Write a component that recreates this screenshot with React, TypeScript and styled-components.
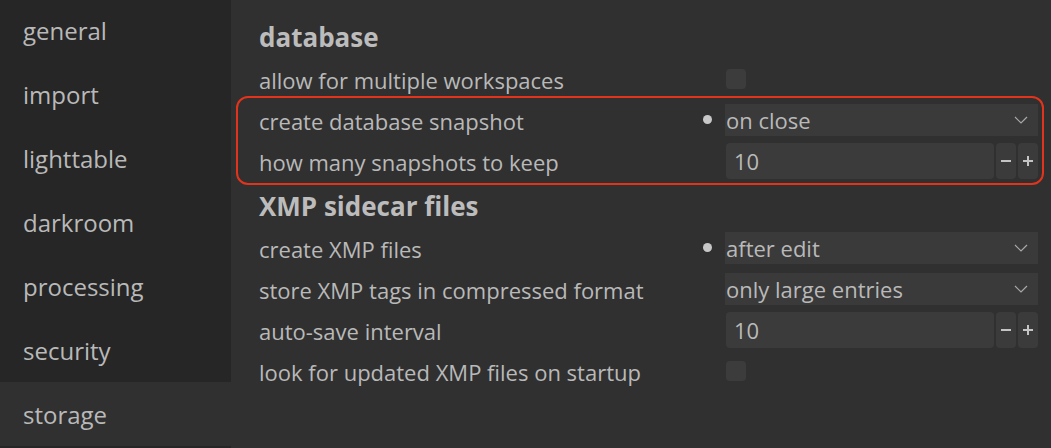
import React from "react";
import styled, { createGlobalStyle } from "styled-components";

const GlobalStyle = createGlobalStyle`
  html, body {
    margin: 0;
    padding: 0;
    background: #303030;
  }
  body {
    font-family: "Open Sans", "Noto Sans", sans-serif;
    color: #b9b9b9;
  }
`;

// layout
const Window = styled.div`
  display: flex;
  width: 1051px;
  height: 448px;
  overflow: hidden;
  background: #303030;
`;

const Sidebar = styled.nav`
  width: 231px;
  flex-shrink: 0;
  background: #262626;
  display: flex;
  flex-direction: column;
  padding-top: 0;
  margin-top: -2px;
`;

const NavItem = styled.div<{ $active?: boolean }>`
  height: 64px;
  flex-shrink: 0;
  display: flex;
  align-items: center;
  padding-left: 23px;
  font-size: 24px;
  color: #b9b9b9;
  background: ${(p) => (p.$active ? "#303030" : "transparent")};
`;

const Main = styled.main`
  flex: 1;
  padding: 12px 13px 0 28px;
  display: flex;
  flex-direction: column;
`;

const SectionTitle = styled.h2`
  margin: 0;
  height: 46px;
  display: flex;
  align-items: center;
  padding-top: 3px;
  box-sizing: border-box;
  font-size: 26px;
  font-weight: 700;
  color: #bcbcbc;
`;

const Row = styled.div`
  height: 41px;
  display: flex;
  align-items: center;
`;

const Label = styled.span`
  flex: 1;
  font-size: 22px;
  padding-top: 2px;
  white-space: nowrap;
`;

const Marker = styled.span<{ $on?: boolean }>`
  width: 28px;
  margin-right: 4px;
  display: flex;
  align-items: center;
  justify-content: center;
  &::before {
    content: "";
    display: ${(p) => (p.$on ? "block" : "none")};
    width: 9px;
    height: 9px;
    border-radius: 50%;
    background: #c8c8c8;
  }
`;

const Control = styled.div`
  width: 313px;
  display: flex;
  align-items: center;
  gap: 2px;
`;

const Select = styled.div`
  flex: 1;
  height: 32px;
  display: flex;
  align-items: center;
  justify-content: space-between;
  padding: 0 10px 0 1px;
  background: #3a3a3a;
  font-size: 22px;
`;

const NumberBox = styled.div`
  flex: 1;
  height: 36px;
  display: flex;
  align-items: center;
  padding-left: 8px;
  margin-left: 1px;
  border-radius: 4px;
  background: #3b3b3b;
  font-size: 22px;
`;

const StepButton = styled.div`
  width: 20px;
  height: 36px;
  border-radius: 4px;
  background: #3b3b3b;
  display: flex;
  align-items: center;
  justify-content: center;
  color: #c4c4c4;
`;

const Checkbox = styled.div`
  width: 20px;
  height: 20px;
  margin-left: 1px;
  border-radius: 4px;
  background: #3c3c3c;
`;

// red annotation frame drawn over a group of rows
const Highlight = styled.div`
  position: relative;
  &::after {
    content: "";
    position: absolute;
    top: -3px;
    bottom: -4px;
    left: -23px;
    right: -6px;
    border: 2px solid #e2341d;
    border-radius: 12px;
    pointer-events: none;
  }
`;

const Chevron = () => (
  <svg width="14" height="8" viewBox="0 0 14 8" fill="none">
    <path d="M1 1l6 6 6-6" stroke="#a9a9a9" strokeWidth="1.2" />
  </svg>
);

const Minus = () => (
  <svg width="12" height="12" viewBox="0 0 12 12">
    <path d="M1 6h10" stroke="#c4c4c4" strokeWidth="2" />
  </svg>
);

const Plus = () => (
  <svg width="12" height="12" viewBox="0 0 12 12">
    <path d="M1 6h10M6 1v10" stroke="#c4c4c4" strokeWidth="2" />
  </svg>
);

const navItems = ["general", "import", "lighttable", "darkroom", "processing", "security", "storage"];

function Dropdown({ value }: { value: string }) {
  return (
    <Select>
      <span>{value}</span>
      <Chevron />
    </Select>
  );
}

function Spinner({ value }: { value: number }) {
  return (
    <>
      <NumberBox>{value}</NumberBox>
      <StepButton><Minus /></StepButton>
      <StepButton><Plus /></StepButton>
    </>
  );
}

export default function App() {
  return (
    <Window>
      <GlobalStyle />
      <Sidebar>
        {navItems.map((name) => (
          <NavItem key={name} $active={name === "storage"}>{name}</NavItem>
        ))}
      </Sidebar>
      <Main>
        <SectionTitle>database</SectionTitle>
        <Row>
          <Label>allow for multiple workspaces</Label>
          <Marker />
          <Control><Checkbox /></Control>
        </Row>
        <Highlight>
          <Row>
            <Label>create database snapshot</Label>
            <Marker $on />
            <Control><Dropdown value="on close" /></Control>
          </Row>
          <Row>
            <Label>how many snapshots to keep</Label>
            <Marker />
            <Control><Spinner value={10} /></Control>
          </Row>
        </Highlight>
        <SectionTitle>XMP sidecar files</SectionTitle>
        <Row>
          <Label>create XMP files</Label>
          <Marker $on />
          <Control><Dropdown value="after edit" /></Control>
        </Row>
        <Row>
          <Label>store XMP tags in compressed format</Label>
          <Marker />
          <Control><Dropdown value="only large entries" /></Control>
        </Row>
        <Row>
          <Label>auto-save interval</Label>
          <Marker />
          <Control><Spinner value={10} /></Control>
        </Row>
        <Row>
          <Label>look for updated XMP files on startup</Label>
          <Marker />
          <Control><Checkbox /></Control>
        </Row>
      </Main>
    </Window>
  );
}
